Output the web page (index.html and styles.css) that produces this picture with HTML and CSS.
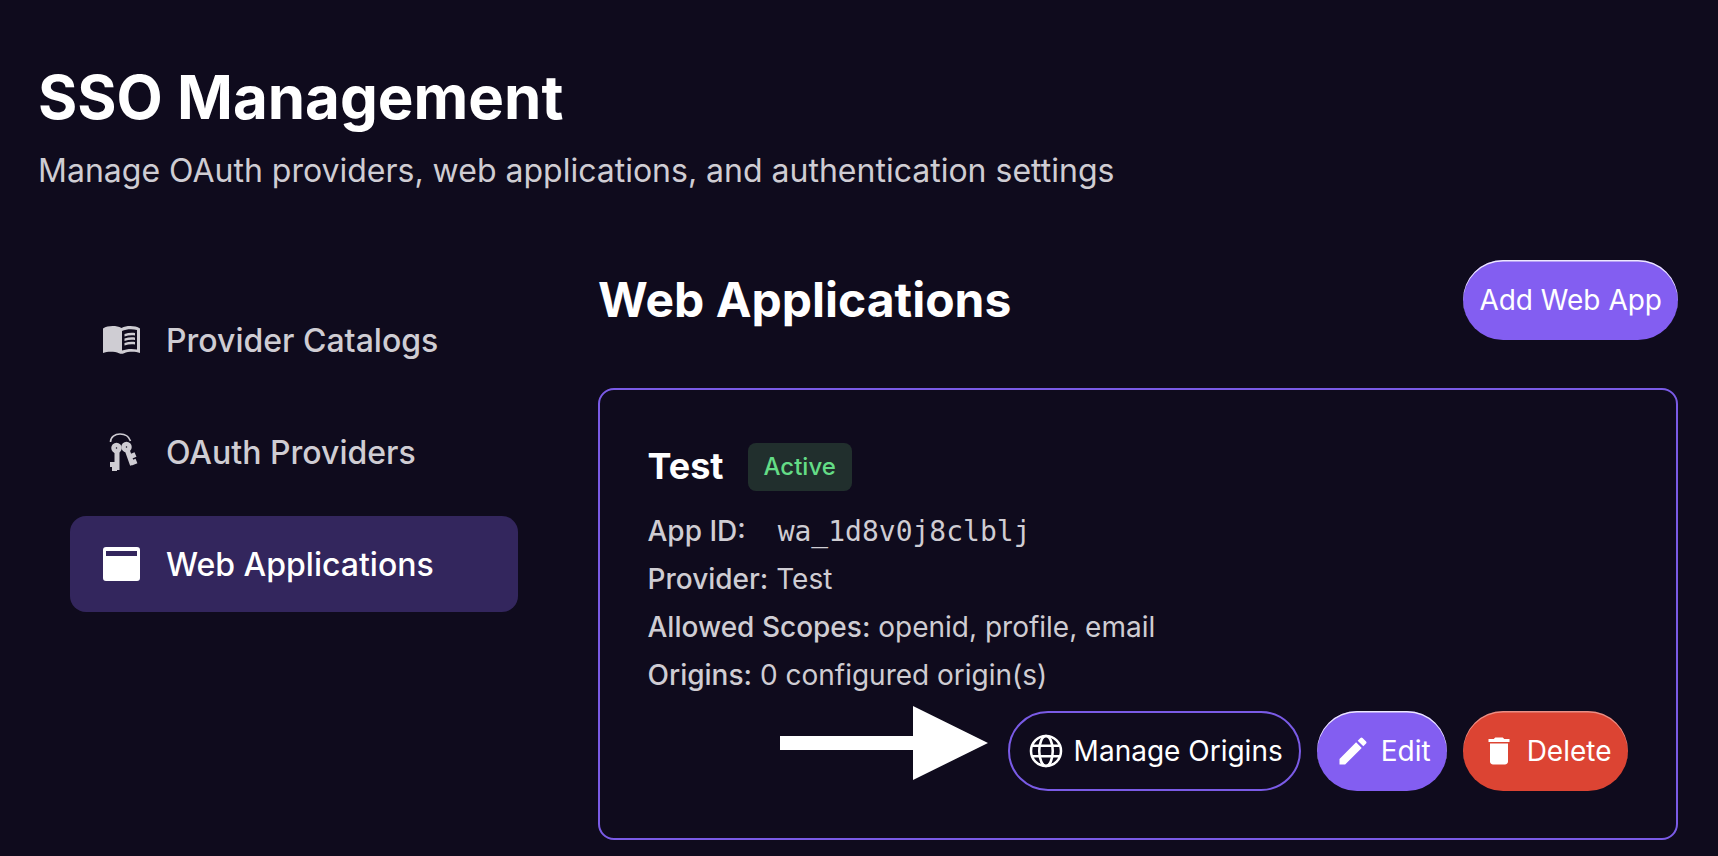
FILE: index.html
```html
<!DOCTYPE html>
<html lang="en">
<head>
<meta charset="utf-8">
<title>SSO Management</title>
<link rel="stylesheet" href="styles.css">
</head>
<body>
<main class="page">
  <header class="page-head">
    <h1 class="page-title">SSO Management</h1>
    <p class="page-sub">Manage OAuth providers, web applications, and authentication settings</p>
  </header>
  <div class="layout">
    <nav class="side">
      <a class="side-item">
        <svg class="side-icon" viewBox="0 0 37 28" fill="currentColor"><path fill-rule="evenodd" d="M0 2.500C5-.5 13-.7 18.500 2c5.500-2.700 13.500-2.500 18.500.5V27c-4.500-1.700-11.500-1.700-16 .2-1.500.7-3.500.7-5 0C11.500 25.300 4.500 25.300 0 27ZM19 5V24.500C23 23 29 22.500 34 23.500V4C29 2.800 23 3.200 19 5Z"/><path d="M21.500 8C25 6.800 28.500 6.500 32 7v2.500C28.500 9 25 9.300 21.500 10.500ZM21.500 12.500C25 11.300 28.500 11 32 11.500V14C28.500 13.500 25 13.800 21.500 15ZM21.500 17C25 15.800 28.500 15.500 32 16v2.500C28.500 18 25 18.300 21.500 19.500Z"/></svg>
        <span>Provider Catalogs</span>
      </a>
      <a class="side-item">
        <svg class="side-icon" viewBox="0 0 37 38" fill="none" stroke="currentColor"><path stroke-width="1.600" d="M7.500 9C7.500 4 12 1 17 1s9 2.500 10.500 7"/><circle cx="13.500" cy="15" r="3" stroke-width="4.500"/><path stroke-width="5" d="M14 19v18M14 31.500H7M14 35.500H9"/><circle cx="23.500" cy="14" r="3" stroke-width="4.500"/><path stroke-width="5" d="M24.500 18l5 14M26.500 24l6-2.500M28.500 30l5-2"/></svg>
        <span>OAuth Providers</span>
      </a>
      <a class="side-item is-active">
        <svg class="side-icon" viewBox="0 0 37 34" fill="currentColor"><path fill-rule="evenodd" d="M3 0H34a3 3 0 0 1 3 3V31a3 3 0 0 1-3 3H3a3 3 0 0 1-3-3V3A3 3 0 0 1 3 0ZM3 4V9H34V4Z"/></svg>
        <span>Web Applications</span>
      </a>
    </nav>
    <section class="content">
      <div class="content-head">
        <h2 class="content-title">Web Applications</h2>
        <button class="btn btn-primary btn-add">Add Web App</button>
      </div>
      <article class="card">
        <div class="card-title-row">
          <h3 class="card-title">Test</h3>
          <span class="badge">Active</span>
        </div>
        <p class="row"><b>App ID:</b> <code class="mono">wa_1d8v0j8clblj</code></p>
        <p class="row"><b>Provider:</b> Test</p>
        <p class="row"><b>Allowed Scopes:</b> openid, profile, email</p>
        <p class="row"><b>Origins:</b> 0 configured origin(s)</p>
        <div class="actions">
          <button class="btn btn-outline">
            <svg class="btn-icon" viewBox="0 0 24 24" fill="none" stroke="currentColor" stroke-width="1.700"><circle cx="12" cy="12" r="10"/><ellipse cx="12" cy="12" rx="4.500" ry="10"/><path d="M3 8.500h18M3 15.500h18"/></svg>
            Manage Origins
          </button>
          <button class="btn btn-primary">
            <svg class="btn-icon" viewBox="0 0 24 24" fill="currentColor"><path d="M3 17.250V21h3.750L17.810 9.940l-3.750-3.750L3 17.250zM20.710 7.040c.39-.39.39-1.020 0-1.410l-2.340-2.340a.996.996 0 0 0-1.410 0l-1.830 1.830 3.750 3.750 1.830-1.830z"/></svg>
            Edit
          </button>
          <button class="btn btn-danger">
            <svg class="btn-icon" viewBox="0 0 24 24" fill="currentColor"><path d="M6 19c0 1.100.9 2 2 2h8c1.100 0 2-.9 2-2V7H6v12zM19 4h-3.500l-1-1h-5l-1 1H5v2h14V4z"/></svg>
            Delete
          </button>
        </div>
        <svg class="arrow" viewBox="0 0 208 74" fill="#fff"><path d="M0 30H133V0L208 37 133 74V44H0Z"/></svg>
      </article>
    </section>
  </div>
</main>
</body>
</html>
```
FILE: styles.css
```css
* { box-sizing: border-box; }
html, body { margin: 0; height: 100%; }
body {
  background: #0f0b1d;
  color: #fff;
  font-family: Inter, "Liberation Sans", sans-serif;
  overflow: hidden;
}
.page { padding: 61px 40px 0 38px; }
.page-title { margin: 0; font-size: 60px; line-height: 72px; font-weight: 700; }
.page-sub { margin: 18px 0 0; font-size: 32px; line-height: 40px; color: #cfcdd3; font-weight: 400; }
.layout { display: flex; margin-top: 69px; gap: 80px; }
.side { width: 448px; margin-left: 32px; padding-top: 32px; flex: none; display: flex; flex-direction: column; gap: 16px; }
.side-item { display: flex; align-items: center; gap: 26px; height: 96px; padding-left: 33px; border-radius: 16px; font-size: 32px; font-weight: 500; color: #cfcdd3; }
.side-icon { width: 37px; height: 38px; flex: none; }
.side-item.is-active { background: #33265d; color: #fff; }
.content { flex: 1; min-width: 0; }
.content-head { display: flex; justify-content: space-between; align-items: center; height: 80px; }
.content-title { margin: 0; font-size: 48px; font-weight: 700; line-height: 64px; }
.btn { display: inline-flex; align-items: center; gap: 9.500px; height: 80px; border: 0; border-radius: 40px; padding: 0 16.500px 0 18px; color: #fff; font: 400 28px Inter, "Liberation Sans", sans-serif; }
.btn-add { padding: 0 16px; }
.btn-primary { background: #835ef1; box-shadow: inset 0 1.500px 0 rgba(255,255,255,.85); }
.btn-danger { background: #dc4433; box-shadow: inset 0 1.500px 0 rgba(255,255,255,.4); }
.btn-outline { background: transparent; border: 2px solid #7a5be6; }
.btn-icon { width: 36px; height: 36px; flex: none; }
.card { position: relative; margin-top: 48px; height: 452px; border: 2px solid #7a5be6; border-radius: 16px; padding: 53px 48px 0 47.500px; }
.card-title-row { display: flex; align-items: center; gap: 24px; height: 48px; margin-bottom: 16px; }
.card-title { margin: 0 0 2px; font-size: 36px; font-weight: 700; }
.badge { display: flex; align-items: center; height: 48px; padding: 0 16px 2px; border-radius: 8px; background: #212f2d; color: #64dc86; font-size: 24px; font-weight: 500; }
.row { margin: 0; height: 48px; line-height: 48px; font-size: 28px; color: #cfcdd3; }
.row b { font-weight: 500; }
.mono { font-family: "DejaVu Sans Mono", monospace; font-size: 28px; margin-left: 24px; }
.actions { display: flex; justify-content: flex-end; gap: 16px; margin-top: 12px; }
.arrow { position: absolute; left: 180px; top: 316px; width: 208px; height: 74px; }
```
